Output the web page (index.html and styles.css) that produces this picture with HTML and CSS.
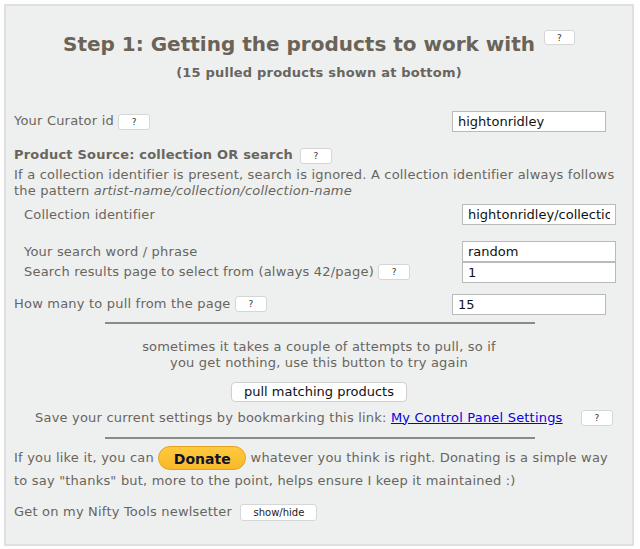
FILE: index.html
```html
<!DOCTYPE html>
<html>

<head>
    <title>Nifty Tools - Step 1</title>
    <link rel="stylesheet" href="styles.css">
</head>

<body>
    <section class="panel">
        <h2 class="step-title">Step 1: Getting the products to work with <button class="help">?</button></h2>
        <div class="step-sub">(15 pulled products shown at bottom)</div>

        <div class="row curator">
            <label for="curator">Your Curator id <button class="help">?</button></label>
            <input id="curator" value="hightonridley" />
        </div>

        <div class="source-head">Product Source: collection OR search <button class="help">?</button></div>
        <p class="source-note">If a collection identifier is present, search is ignored. A collection identifier always follows
            the pattern <i>artist-name/collection/collection-name</i></p>

        <div class="sub-group">
            <div class="row collection">
                <label for="collection">Collection identifier</label>
                <input id="collection" value="hightonridley/collection/" />
            </div>
            <div class="row search">
                <label for="search">Your search word / phrase</label>
                <input id="search" value="random" />
            </div>
            <div class="row page">
                <label for="page">Search results page to select from (always 42/page) <button class="help">?</button></label>
                <input id="page" value="1" />
            </div>
        </div>

        <div class="row pull-count">
            <label for="count">How many to pull from the page <button class="help">?</button></label>
            <input id="count" value="15" />
        </div>

        <hr>

        <p class="pull-note">sometimes it takes a couple of attempts to pull, so if<br>you get nothing, use this button to try again</p>
        <div class="pull-box"><button class="pull">pull matching products</button></div>
        <p class="bookmark">Save your current settings by bookmarking this link: <a href="#">My Control Panel Settings</a> <button class="help">?</button></p>

        <hr>

        <p class="donate-line">If you like it, you can <button class="donate">Donate</button> whatever you think is right. Donating is a simple way to say "thanks" but, more to the point, helps ensure I keep it maintained :)</p>
        <p class="newsletter">Get on my Nifty Tools newlsetter <button class="toggle">show/hide</button></p>
    </section>
</body>

</html>
```

FILE: styles.css
```css
* {
    box-sizing: border-box;
}

body {
    margin: 0;
    background: #fff;
    font-family: "DejaVu Sans", Verdana, sans-serif;
    font-size: 13px;
    letter-spacing: 0.2px;
    color: #69655e;
}

.panel {
    margin: 4px 6px 3px 4px;
    height: 542px;
    background-color: #eef0ef;
    border: 2px solid #dfe0df;
    padding: 0 8px;
}

p {
    margin: 0;
}

button {
    font-family: inherit;
    letter-spacing: 0;
    cursor: pointer;
}

.help {
    width: 32px;
    height: 16px;
    padding: 0;
    font-size: 9px;
    line-height: 14px;
    color: #333;
    background: #fff;
    border: 1px solid #d6d6d6;
    border-radius: 3px;
    vertical-align: middle;
}

input {
    width: 154px;
    height: 21px;
    padding: 0 5px;
    font-family: inherit;
    font-size: 13px;
    color: #111;
    background: #fff;
    border: 1px solid #b9bbba;
}

.step-title {
    margin: 26px 0 0;
    text-align: center;
    font-size: 20px;
    line-height: 24px;
    letter-spacing: 0;
    color: #6a6358;
}

.step-title .help {
    position: relative;
    top: -8px;
    width: 31px;
    height: 15px;
    margin-left: 2px;
}

.step-sub {
    margin-top: 9px;
    text-align: center;
    font-weight: bold;
    line-height: 16px;
}

.row {
    display: flex;
    align-items: center;
    justify-content: space-between;
    padding-right: 18px;
}

.curator {
    margin-top: 30px;
}

.source-head {
    margin-top: 15px;
    font-weight: bold;
    line-height: 16px;
}

.source-head .help {
    margin-left: 2px;
}

.source-note {
    line-height: 16px;
    margin-top: 3px;
}

.sub-group {
    padding-left: 10px;
}

.sub-group .row {
    padding-right: 8px;
}

.collection {
    margin-top: 5px;
}

.search {
    margin-top: 16px;
}

.pull-count {
    margin-top: 11px;
}

hr {
    width: 430px;
    margin: 7px auto 0;
    border: none;
    border-top: 2px solid #8a8a88;
    position: relative;
    left: 1px;
}

.pull-note {
    margin-top: 15px;
    text-align: center;
    line-height: 16px;
}

.pull-box {
    text-align: center;
    margin-top: 11px;
}

.pull {
    width: 176px;
    height: 20px;
    padding: 0;
    font-size: 13px;
    color: #111;
    background: #fff;
    border: 1px solid #cfcfcf;
    border-radius: 4px;
}

.bookmark {
    margin-top: 7px;
    padding-left: 10px;
    text-align: center;
    line-height: 18px;
}

.bookmark a {
    color: #0a00e0;
}

.bookmark .help {
    margin-left: 14px;
}

.bookmark + hr {
    margin-top: 10px;
}

.donate-line {
    margin-top: 7px;
    line-height: 21px;
}

.donate {
    width: 88px;
    height: 24px;
    padding: 2px 0 0;
    font-size: 14px;
    font-weight: bold;
    color: #10142a;
    background: linear-gradient(#ffc93e, #f9b82a);
    border: 1px solid #e6a11d;
    border-radius: 12px;
    vertical-align: middle;
}

.newsletter {
    margin-top: 12px;
    line-height: 18px;
}

.toggle {
    width: 77px;
    height: 17px;
    margin-left: 4px;
    padding: 0;
    font-size: 10px;
    color: #222;
    background: #fff;
    border: 1px solid #d6d6d6;
    border-radius: 3px;
    vertical-align: middle;
}
```
